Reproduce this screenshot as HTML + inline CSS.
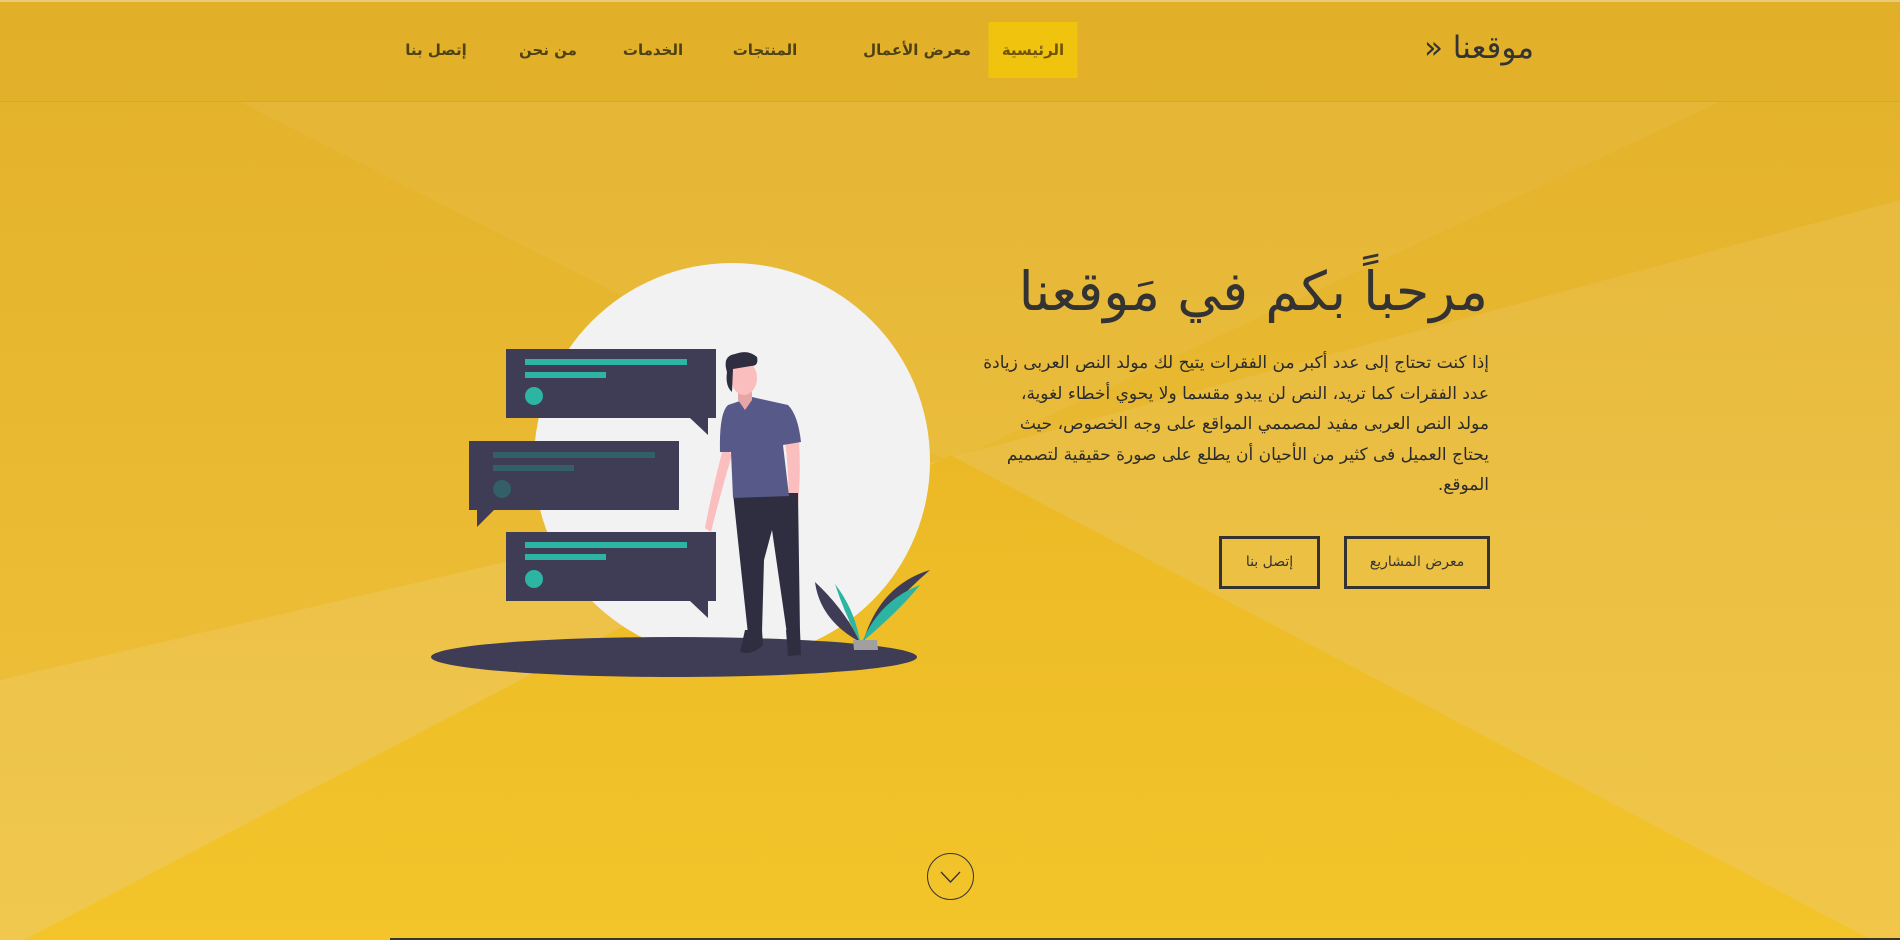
<!DOCTYPE html>
<html lang="ar" dir="rtl">
<head>
<meta charset="utf-8">
<style>
*{margin:0;padding:0;box-sizing:border-box}
html,body{width:1900px;height:940px;overflow:hidden}
body{position:relative;background:#e9b92c;font-family:"DejaVu Sans","Liberation Sans",sans-serif;color:#333}
#bg{position:absolute;left:0;top:0}
.hdr{position:absolute;left:0;top:0;width:1900px;height:102px;border-top:2px solid rgba(255,255,255,.35);border-bottom:1px solid rgba(160,110,0,.15);background:rgba(200,140,0,.03)}
.logo{position:absolute;right:366px;top:28px;font-size:31px;color:#333;white-space:nowrap;line-height:40px}
.nav a{position:absolute;top:22px;height:56px;line-height:56px;font-size:15px;font-weight:bold;color:#4e4215;text-decoration:none;white-space:nowrap;transform:translateX(50%)}
.nav a.act{background:#f0c30e;color:#6f5408;width:89px;text-align:center}
h1{position:absolute;right:412px;top:254px;font-size:54px;font-weight:normal;color:#333;white-space:nowrap;line-height:76px}
p.t{position:absolute;right:411px;top:348px;width:560px;font-size:17px;line-height:30.5px;color:#2b2b2b;text-align:right;white-space:nowrap;letter-spacing:-.1px}
.btn{position:absolute;top:536px;height:53px;border:3.5px solid #333;font-size:14px;color:#333;text-align:center;line-height:46px}
.dn{position:absolute;left:927px;top:853px;width:47px;height:47px;border:1px solid #333;border-radius:50%}
.bl{position:absolute;left:390px;bottom:0;width:1510px;height:2px;background:#3a3525}
</style>
</head>
<body>
<svg id="bg" width="1900" height="940" viewBox="0 0 1900 940">
<defs>
<linearGradient id="g" x1="0" y1="0" x2="0" y2="1">
<stop offset="0" stop-color="#e3b12a"/><stop offset="1" stop-color="#f0c23a"/></linearGradient>
<linearGradient id="g2" x1="0" y1="0" x2="0" y2="1">
<stop offset="0" stop-color="#ebb926"/><stop offset="1" stop-color="#f3c52a"/></linearGradient>
</defs>
<rect width="1900" height="940" fill="url(#g)"/>
<polygon points="240,102 1720,102 950,462" fill="#fff" opacity=".05"/>
<polygon points="0,680 950,458 24,940 0,940" fill="#fff" opacity=".1"/>
<polygon points="1900,200 950,458 1872,940 1900,940" fill="#fff" opacity=".08"/>
<polygon points="950,455 24,940 1872,940" fill="url(#g2)"/>
<circle cx="732" cy="461" r="198" fill="#f2f2f2"/>
<ellipse cx="674" cy="657" rx="243" ry="20" fill="#3f3d56"/>
<rect x="506" y="349" width="210" height="69" fill="#3f3d56"/>
<polygon points="690,418 708,418 708,435" fill="#3f3d56"/>
<rect x="525" y="359" width="162" height="6" fill="#2bb5a2"/>
<rect x="525" y="372" width="81" height="6" fill="#2bb5a2"/>
<circle cx="534" cy="396" r="9" fill="#2bb5a2"/>
<rect x="469" y="441" width="210" height="69" fill="#3f3d56"/>
<polygon points="477,510 494,510 477,527" fill="#3f3d56"/>
<rect x="493" y="452" width="162" height="6" fill="#325f68"/>
<rect x="493" y="465" width="81" height="6" fill="#325f68"/>
<circle cx="502" cy="489" r="9" fill="#325f68"/>
<rect x="506" y="532" width="210" height="69" fill="#3f3d56"/>
<polygon points="690,601 708,601 708,618" fill="#3f3d56"/>
<rect x="525" y="542" width="162" height="6" fill="#2bb5a2"/>
<rect x="525" y="554" width="81" height="6" fill="#2bb5a2"/>
<circle cx="534" cy="579" r="9" fill="#2bb5a2"/>
<path d="M724,445 Q712,490 705,528 L711,532 Q720,495 732,455 Z" fill="#fbbebe"/>
<path d="M785,440 L799,440 Q802,490 794,532 L787,530 Q791,490 785,440 Z" fill="#fbbebe"/>
<path d="M733,493 L798,493 L800,632 L787,634 L772,530 L764,560 L762,632 L748,634 Q740,560 733,493 Z" fill="#2f2e41"/>
<path d="M745,630 L762,630 L763,645 Q752,656 740,652 Z" fill="#2f2e41"/>
<path d="M786,630 L800,630 L801,655 L788,656 Z" fill="#2f2e41"/>
<path d="M728,405 L752,397 L788,405 Q798,415 801,442 L783,445 L789,496 L733,498 L731,452 L720,452 Q719,413 728,405 Z" fill="#575a89"/>
<path d="M738,385 L752,385 L752,400 L745,410 L738,400 Z" fill="#e8a5a5"/>
<ellipse cx="744" cy="378" rx="13" ry="17" fill="#fbbebe"/>
<path d="M727,372 Q722,356 735,354 Q748,349 757,357 Q759,366 751,366 L733,369 L732,392 Q725,386 727,372 Z" fill="#2f2e41"/>
<path d="M815,582 Q820,620 860,642 Q845,610 815,582 Z" fill="#3f3d56"/>
<path d="M835,584 Q845,615 860,642 Q855,610 835,584 Z" fill="#2bb5a2"/>
<path d="M863,642 Q880,585 930,570 Q895,600 863,642 Z" fill="#3f3d56"/>
<path d="M862,642 Q880,600 920,585 Q900,610 862,642 Z" fill="#2bb5a2"/>
<path d="M853,640 L877,640 L878,650 L854,650 Z" fill="#a0a0a0"/>
</svg>

<div class="hdr"></div>
<div class="logo">موقعنا «</div>
<div class="nav">
<a class="act" style="right:867px">الرئيسية</a>
<a style="right:983px">معرض الأعمال</a>
<a style="right:1135px">المنتجات</a>
<a style="right:1247px">الخدمات</a>
<a style="right:1352px">من نحن</a>
<a style="right:1464px">إتصل بنا</a>
</div>

<h1>مرحباً بكم في مَوقعنا</h1>
<p class="t">إذا كنت تحتاج إلى عدد أكبر من الفقرات يتيح لك مولد النص العربى زيادة<br>عدد الفقرات كما تريد، النص لن يبدو مقسما ولا يحوي أخطاء لغوية،<br>مولد النص العربى مفيد لمصممي المواقع على وجه الخصوص، حيث<br>يحتاج العميل فى كثير من الأحيان أن يطلع على صورة حقيقية لتصميم<br>الموقع.</p>
<div class="btn" style="left:1344px;width:146px">معرض المشاريع</div>
<div class="btn" style="left:1219px;width:101px">إتصل بنا</div>

<div class="dn"><svg width="45" height="45" viewBox="0 0 45 45"><path d="M13,18 L22.5,28 L32,18" fill="none" stroke="#333" stroke-width="1.3"/></svg></div>
<div class="bl"></div>
</body>
</html>
